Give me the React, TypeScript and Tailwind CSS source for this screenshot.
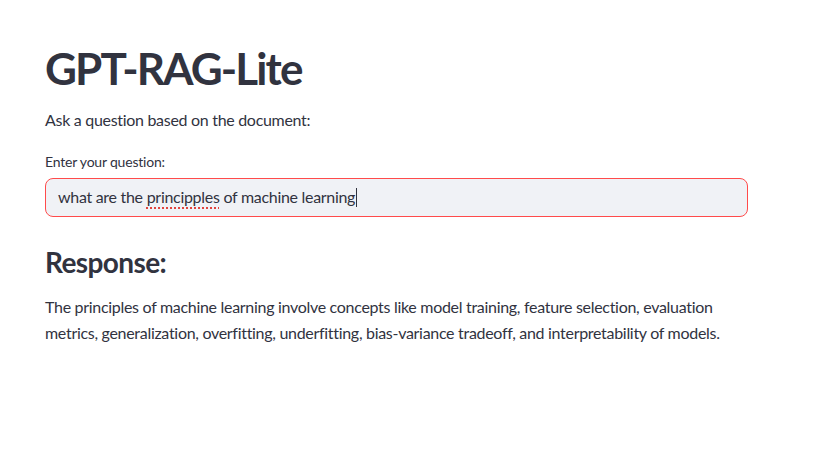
const App = () => {
  return (
    <div
      className="min-h-screen w-full bg-white text-[#31333f]"
      style={{ fontFamily: "Lato, 'Noto Sans', sans-serif" }}
    >
      <div className="w-[703px] ml-[45px] pt-[38px]">
        <h1 className="text-[44px] font-bold leading-[1.2] tracking-[-1.9px] py-[4px]">
          GPT-RAG-Lite
        </h1>
        <p className="text-[16px] leading-[1.6] tracking-[-0.3px] mt-[8px]">
          Ask a question based on the document:
        </p>
        <div className="mt-[19px]">
          <label className="block text-[14px] leading-[1.6] tracking-[-0.2px] mb-[4px]">
            Enter your question:
          </label>
          <div className="h-[39px] rounded-[8px] border border-[#ff4b4b] bg-[#f0f2f6] flex items-center px-[12px] text-[16px] tracking-[-0.3px]">
            <span>what are the </span>
            <span className="underline decoration-dotted decoration-[#e0443e] decoration-[1.5px] underline-offset-[4px] mx-[4px]">
              principples
            </span>
            <span>of machine learning</span>
            <span className="inline-block w-px h-[19px] bg-[#31333f] ml-px" />
          </div>
        </div>
        <h2 className="text-[28px] font-bold leading-[1.2] tracking-[-0.6px] mt-[29px]">
          Response:
        </h2>
        <p className="text-[16px] leading-[26px] tracking-[-0.3px] mt-[15px]">
          The principles of machine learning involve concepts like model
          training, feature selection, evaluation metrics, generalization,
          overfitting, underfitting, bias-variance tradeoff, and
          interpretability of models.
        </p>
      </div>
    </div>
  );
};

export default App;
